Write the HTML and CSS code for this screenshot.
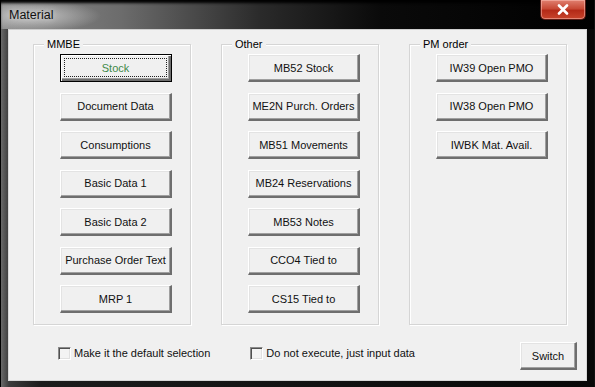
FILE: index.html
```html
<!DOCTYPE html>
<html>
<head>
<meta charset="utf-8">
<link rel="stylesheet" href="styles.css">
</head>
<body>
<div class="window">
  <div class="titlebar">
    <span class="title">Material</span>
    <span class="close"><svg width="14" height="11" viewBox="0 0 14 11"><path d="M3 1.5 L11 9.5 M11 1.5 L3 9.5" stroke="#fff" stroke-width="2.6" stroke-linecap="round"/></svg></span>
  </div>
  <div class="client">
    <div class="groups">
      <div class="group">
        <div class="legend">MMBE</div>
        <div class="btns">
          <div class="btn default"><span class="focus">Stock</span></div>
          <div class="btn">Document Data</div>
          <div class="btn">Consumptions</div>
          <div class="btn">Basic Data 1</div>
          <div class="btn">Basic Data 2</div>
          <div class="btn">Purchase Order Text</div>
          <div class="btn">MRP 1</div>
        </div>
      </div>
      <div class="group">
        <div class="legend">Other</div>
        <div class="btns">
          <div class="btn">MB52 Stock</div>
          <div class="btn">ME2N Purch. Orders</div>
          <div class="btn">MB51 Movements</div>
          <div class="btn">MB24 Reservations</div>
          <div class="btn">MB53 Notes</div>
          <div class="btn">CCO4 Tied to</div>
          <div class="btn">CS15 Tied to</div>
        </div>
      </div>
      <div class="group">
        <div class="legend">PM order</div>
        <div class="btns">
          <div class="btn">IW39 Open PMO</div>
          <div class="btn">IW38 Open PMO</div>
          <div class="btn">IWBK Mat. Avail.</div>
        </div>
      </div>
    </div>
    <div class="bottom">
      <label class="check"><span class="box"></span>Make it the default selection</label>
      <label class="check second"><span class="box"></span>Do not execute, just input data</label>
      <div class="btn switch">Switch</div>
    </div>
  </div>
</div>
</body>
</html>
```
FILE: styles.css
```css
html, body {
  margin: 0;
  padding: 0;
  background: #000;
}
body {
  width: 595px;
  height: 387px;
  overflow: hidden;
  font-family: "Liberation Sans", Arial, sans-serif;
  font-size: 11px;
  color: #000;
}
.window {
  width: 595px;
  height: 387px;
  box-sizing: border-box;
  background: linear-gradient(90deg, #6a6a6a 0px, #3c3c3c 8px, #1c1c1c 40px, #080808 100%);
  padding: 0 7px 6px 7px;
  display: flex;
  flex-direction: column;
  border-left: 1px solid #000;
  border-right: 1px solid #111;
}
.titlebar {
  height: 29px;
  flex: none;
  display: flex;
  align-items: flex-start;
  justify-content: space-between;
  margin: 0 -7px;
  padding: 0 8px 0 8px;
  background:
    radial-gradient(ellipse 70px 16px at 30px 16px, rgba(200,200,200,0.95), rgba(150,150,150,0) 100%),
    linear-gradient(90deg, #8c8c8c 0px, #6c6c6c 120px, #2a2a2a 260px, #0a0a0a 380px, #000 100%);
  box-shadow: inset 0 4px 3px -1px #000;
}
.title {
  font-family: "Liberation Sans", Arial, sans-serif;
  font-size: 12.5px;
  margin-top: 8px;
  color: #111;
  text-shadow: 0 0 6px #ddd;
}
.close {
  width: 46px;
  height: 20px;
  box-sizing: border-box;
  border: 1px solid #5a1a14;
  border-top: none;
  border-radius: 0 0 5px 5px;
  background: linear-gradient(180deg, #e08070 0%, #c84a36 45%, #b42a18 55%, #c8442c 100%);
  box-shadow: inset 0 0 0 1px rgba(255,200,190,0.5);
  display: flex;
  align-items: center;
  justify-content: center;
}
.client {
  flex: 1;
  background: #f0f0f0;
  border: 1px solid #d8d8d8;
  border-top-color: #cfcfcf;
  box-sizing: border-box;
  padding: 14px 0 0 24px;
  display: flex;
  flex-direction: column;
}
.groups {
  display: flex;
  gap: 30px;
}
.group {
  width: 158px;
  height: 281px;
  box-sizing: border-box;
  border: 1px solid #d5d5d5;
  box-shadow: inset 1px 1px 0 #fff, 1px 1px 0 #fff;
  padding: 0 0 0 26px;
}
.legend {
  display: block;
  width: fit-content;
  height: 13px;
  line-height: 13px;
  margin: -7px 0 0 -16px;
  padding: 0 3px;
  background: #f0f0f0;
}
.btns {
  display: flex;
  flex-direction: column;
  gap: 10.5px;
  margin-top: 3px;
}
.btn {
  width: 112px;
  height: 28px;
  box-sizing: border-box;
  background: #f0f0f0;
  border-top: 1px solid #fff;
  border-left: 1px solid #fff;
  border-right: 2px solid #6e6e6e;
  border-bottom: 2px solid #6e6e6e;
  box-shadow: inset -1px -1px 0 #a0a0a0, inset 1px 1px 0 #e3e3e3;
  display: flex;
  align-items: center;
  justify-content: center;
  color: #111;
  white-space: nowrap;
}
.btn.default {
  border: 1px solid #000;
  box-shadow: inset 1px 1px 0 #fff, inset -2px -2px 0 #6e6e6e, inset -3px -3px 0 #a0a0a0;
  padding: 3px 4px 4px 3px;
}
.focus {
  flex: 1;
  align-self: stretch;
  border: 1px dotted #222;
  display: flex;
  align-items: center;
  justify-content: center;
  color: #3f8a4a;
}
.bottom {
  display: flex;
  align-items: center;
  margin-top: 11px;
  padding-left: 25px;
}
.check {
  display: flex;
  align-items: center;
  gap: 3px;
  color: #111;
}
.second {
  margin-left: 40px;
}
.box {
  width: 13px;
  height: 13px;
  box-sizing: border-box;
  border-top: 1px solid #8a8a8a;
  border-left: 1px solid #8a8a8a;
  border-right: 1px solid #fff;
  border-bottom: 1px solid #fff;
  box-shadow: inset 1px 1px 0 #505050, inset -1px -1px 0 #e0e0e0;
  background: #f3f3f3;
}
.switch {
  width: 57px;
  height: 28px;
  margin-left: auto;
  margin-right: 9px;
  margin-top: 6px;
}
```
